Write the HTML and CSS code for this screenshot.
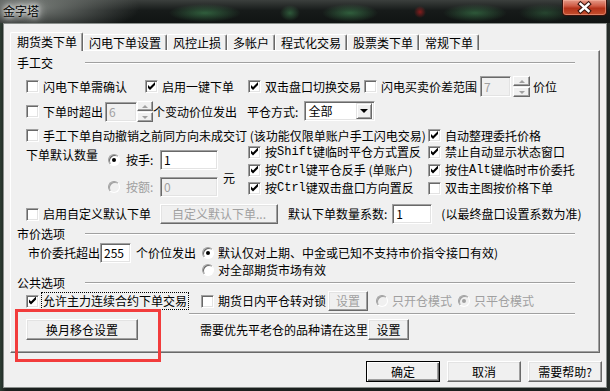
FILE: index.html
```html
<!DOCTYPE html>
<html>
<head>
	<meta charset="utf-8">
	<title>金字塔</title>
	<link rel="stylesheet" href="styles.css">
</head>
<body>

	<div class="window">
		<div class="titlebar">
			<span class="title">金字塔</span>
			<div class="close">
				<svg width="45" height="16" viewBox="0 0 45 16">
					<path d="M18.5 4 L26.5 11 M26.5 4 L18.5 11" stroke="#3a1610" stroke-width="4.6" stroke-linecap="square" fill="none"/>
					<path d="M18.5 4 L26.5 11 M26.5 4 L18.5 11" stroke="#fff" stroke-width="2.4" stroke-linecap="square" fill="none"/>
				</svg>
			</div>
		</div>

		<div class="client">
			<div class="tabs">
				<span class="tab on">期货类下单</span>
				<span class="tab">闪电下单设置</span>
				<span class="tab">风控止损</span>
				<span class="tab">多帐户</span>
				<span class="tab">程式化交易</span>
				<span class="tab">股票类下单</span>
				<span class="tab">常规下单</span>
			</div>

			<div class="panel">
				<div class="group"><span class="group-label">手工交</span><span class="rule"></span></div>

				<div class="row r1">
					<label class="chk w119"><span class="cb"></span>闪电下单需确认</label>
					<label class="chk w103"><span class="cb on"></span>启用一键下单</label>
					<label class="chk w116"><span class="cb on"></span>双击盘口切换交易</label>
					<label class="chk"><span class="cb"></span>闪电买卖价差范围</label>
					<span class="field off f31 ml3">7</span>
					<span class="spin ml2"><span class="up"></span><span class="down"></span></span>
					<span class="ml3">价位</span>
				</div>

				<div class="row r2">
					<label class="chk"><span class="cb"></span>下单时超出</label>
					<span class="field off f32 ml2">6</span>
					<span class="spin narrow"><span class="up"></span><span class="down"></span></span>
					<span>个变动价位发出</span>
					<span class="ml10">平仓方式:</span>
					<span class="select ml6"><span class="select-text">全部</span><span class="drop"></span></span>
				</div>

				<div class="row r3">
					<label class="chk w402"><span class="cb"></span>手工下单自动撤销之前同方向未成交订 (该功能仅限单账户手工闪电交易)</label>
					<label class="chk"><span class="cb on"></span>自动整理委托价格</label>
				</div>

				<div class="qty">
					<div class="qty-left">
						<span class="qty-label">下单默认数量</span>
						<div class="qty-radios">
							<div class="qty-row"><span class="rb on"></span><span class="qty-name">按手:</span><span class="field f58">1</span></div>
							<div class="qty-row off"><span class="rb off"></span><span class="qty-name">按额:</span><span class="field off f58">0</span></div>
						</div>
						<span class="yuan">元</span>
					</div>
					<div class="qty-checks">
						<label class="chk"><span class="cb on"></span>按<span class="mono">Shift</span>键临时平仓方式置反</label>
						<label class="chk"><span class="cb on"></span>禁止自动显示状态窗口</label>
						<label class="chk"><span class="cb on"></span>按<span class="mono">Ctrl</span>键平仓反手 (单账户)</label>
						<label class="chk"><span class="cb on"></span>按住<span class="mono">Alt</span>键临时市价委托</label>
						<label class="chk"><span class="cb on"></span>按<span class="mono">Ctrl</span>键双击盘口方向置反</label>
						<label class="chk"><span class="cb"></span>双击主图按价格下单</label>
					</div>
				</div>

				<div class="row r-custom">
					<label class="chk w134"><span class="cb"></span>启用自定义默认下单</label>
					<span class="btn off w118">自定义默认下单...</span>
					<span class="ml10">默认下单数量系数:</span>
					<span class="field f40 ml5">1</span>
					<span class="ml9">(以最终盘口设置系数为准)</span>
				</div>

				<div class="group g-market"><span class="group-label">市价选项</span><span class="rule"></span></div>

				<div class="row r-market">
					<span class="ml2">市价委托超出</span>
					<span class="field f31">255</span>
					<span class="ml5">个价位发出</span>
					<label class="opt ml6"><span class="rb on"></span>默认仅对上期、中金或已知不支持市价指令接口有效)</label>
				</div>
				<div class="row r-market2">
					<label class="opt ml176"><span class="rb"></span>对全部期货市场有效</label>
				</div>

				<div class="group g-public"><span class="group-label">公共选项</span><span class="rule"></span></div>

				<div class="row r-allow">
					<label class="chk"><span class="cb on"></span><span class="focus">允许主力连续合约下单交易</span></label>
					<label class="chk ml12"><span class="cb"></span>期货日内平仓转对锁</label>
					<span class="btn off w40 ml2">设置</span>
					<label class="opt off ml8"><span class="rb off"></span>只开仓模式</label>
					<label class="opt off ml6"><span class="rb off on"></span>只平仓模式</label>
				</div>
				<div class="rule sub"></div>

				<div class="row r-roll">
					<span class="btn w112">换月移仓设置</span>
					<span class="ml62">需要优先平老仓的品种请在这里</span>
					<span class="btn w41">设置</span>
				</div>
			</div>

			<div class="actions">
				<span class="btn def">确定</span>
				<span class="btn">取消</span>
				<span class="btn">需要帮助?</span>
			</div>
		</div>

		<div class="mark"></div>
	</div>

</body>
</html>
```
FILE: styles.css
```css
body {
	margin: 0;
	font-family: "Noto Sans CJK SC", "Liberation Sans", sans-serif;
	font-size: 12px;
	line-height: 14px;
	color: #000;
	background: #1a1f1d;
}

.window {
	position: relative;
	width: 610px;
	height: 391px;
	display: flex;
	flex-direction: column;
	overflow: hidden;
	background: linear-gradient(90deg, #2d3d33, #1b201e 1%, #1b201e 99%, #2b322e);
}

/* title bar, aero glass over a dark wallpaper */
.titlebar {
	height: 23px;
	flex: none;
	display: flex;
	justify-content: space-between;
	background:
		radial-gradient(ellipse 36px 9px at 205px 13px, rgba(70, 150, 90, .55), transparent),
		radial-gradient(ellipse 10px 8px at 290px 13px, rgba(70, 150, 90, .5), transparent),
		radial-gradient(ellipse 28px 9px at 350px 13px, rgba(70, 150, 90, .55), transparent),
		radial-gradient(ellipse 6px 6px at 420px 12px, rgba(180, 30, 30, .7), transparent),
		radial-gradient(ellipse 32px 9px at 475px 13px, rgba(70, 150, 90, .5), transparent),
		radial-gradient(ellipse 26px 9px at 545px 13px, rgba(70, 150, 90, .35), transparent),
		radial-gradient(ellipse 110px 28px at 30px 8px, rgba(150, 155, 150, .75), transparent),
		linear-gradient(#3b3f3d, #171b1a 45%, #101413);
}

.title {
	padding: 4px 0 0 3px;
	color: #000;
	text-shadow: 0 0 4px #fff, 0 0 8px #fff, 0 0 12px #eee;
}

.close {
	width: 45px;
	height: 16px;
	margin-right: 3px;
	box-sizing: border-box;
	border: 1px solid #3a120c;
	border-top: none;
	border-radius: 0 0 4px 4px;
	background: linear-gradient(#e49a88, #cf5b44 40%, #b4321a 55%, #c4502e);
	box-shadow: inset 0 0 0 1px rgba(255, 190, 170, .45);
}

.close svg {
	display: block;
	margin-left: -1px;
}

.client {
	flex: 1;
	margin: 0 3px 3px;
	border: 1px solid #8a8f8c;
	background: #f0f0f0;
	padding: 8px 0 0 6px;
	display: flex;
	flex-direction: column;
}

/* tabs */
.tabs {
	display: flex;
	align-items: flex-end;
	height: 18px;
}

.tab {
	height: 16px;
	box-sizing: border-box;
	padding: 1px 5px 0;
	border: 1px solid;
	border-bottom: none;
	border-color: #fff #696969 #fff #fff;
	box-shadow: inset -1px 0 #a0a0a0;
	border-radius: 2px 2px 0 0;
	white-space: nowrap;
}

.tab.on {
	height: 19px;
	margin-bottom: -1px;
	padding: 2px 5px 0 6px;
	background: #f0f0f0;
	position: relative;
	z-index: 1;
}

.panel {
	position: relative;
	width: 590px;
	height: 303px;
	box-sizing: border-box;
	border: 1px solid;
	border-color: #fff #696969 #696969 #fff;
	box-shadow: inset -1px -1px #a0a0a0;
	padding: 5px 0 0 15px;
	display: flex;
	flex-direction: column;
}

.group {
	display: flex;
	align-items: center;
	height: 14px;
	margin-left: -9px;
}

.group-label {
	width: 68px;
}

.rule {
	flex: 1;
	height: 0;
	border-top: 1px solid #a0a0a0;
	border-bottom: 1px solid #fff;
	margin-right: 24px;
}

.rule.sub {
	flex: none;
	margin: 2px 24px 0 163px;
}

.row {
	display: flex;
	align-items: center;
	height: 20px;
	white-space: nowrap;
}

.r1 { margin-top: 6px; height: 21px; }
.r2 { margin-top: 4px; height: 21px; }
.r3 { margin-top: 6px; height: 15px; }
.r-custom { margin-top: 7px; }
.g-market { margin-top: 3px; }
.r-market { margin-top: 2px; }
.r-market2 { height: 14px; }
.g-public { margin-top: -1px; }
.r-allow { margin-top: 1px; }
.r-roll { margin-top: 4px; height: 21px; }

/* checkboxes and radios */
.chk, .opt {
	display: flex;
	align-items: center;
	white-space: nowrap;
}

.cb {
	position: relative;
	flex: none;
	width: 13px;
	height: 13px;
	box-sizing: border-box;
	margin-right: 4px;
	border: 1px solid;
	border-color: #a0a0a0 #fff #fff #a0a0a0;
	box-shadow: inset 1px 1px #696969, inset -1px -1px #e3e3e3;
	background: #fff;
}

.cb.on::after {
	content: "";
	position: absolute;
	left: 1px;
	top: 1px;
	width: 9px;
	height: 9px;
	background: #000;
	clip-path: polygon(1px 3px, 3px 5px, 8px 0, 8px 3px, 3px 8px, 1px 6px);
}

.rb {
	position: relative;
	flex: none;
	width: 12px;
	height: 12px;
	box-sizing: border-box;
	border-radius: 50%;
	border: 1px solid;
	border-color: #a0a0a0 #fff #fff #a0a0a0;
	box-shadow: inset 1px 1px #696969;
	background: #fff;
}

.opt .rb {
	margin-right: 4px;
}

.rb.on::after {
	content: "";
	position: absolute;
	left: 3px;
	top: 3px;
	width: 4px;
	height: 4px;
	border-radius: 50%;
	background: #000;
}

.rb.off {
	background: #f0f0f0;
	box-shadow: inset 1px 1px #a0a0a0;
}

.rb.off.on::after {
	background: #a0a0a0;
}

.opt.off, .qty-row.off {
	color: #a0a0a0;
}

.focus {
	margin-left: -2px;
	padding: 1px;
	border: 1px dotted #000;
}

.mono {
	font-family: "Liberation Mono", monospace;
	font-size: 12px;
}

/* edit fields */
.field {
	display: flex;
	align-items: center;
	flex: none;
	height: 20px;
	box-sizing: border-box;
	padding: 0 3px;
	border: 1px solid;
	border-color: #a0a0a0 #fff #fff #a0a0a0;
	box-shadow: inset 1px 1px #696969, inset -1px -1px #e3e3e3;
	background: #fff;
}

.field.off {
	background: #f0f0f0;
	color: #a0a0a0;
}

.r1 .field { height: 21px; }

.f31 { width: 31px; }
.f32 { width: 32px; }
.f40 { width: 40px; }
.f58 { width: 58px; }

.spin {
	display: flex;
	flex-direction: column;
	gap: 1px;
	width: 17px;
	flex: none;
}

.spin.narrow { width: 16px; }

.spin span {
	height: 10px;
	box-sizing: border-box;
	border: 1px solid;
	border-color: #fff #696969 #696969 #fff;
	box-shadow: inset -1px -1px #a0a0a0;
	display: flex;
	align-items: center;
	justify-content: center;
}

.spin .up::after {
	content: "";
	border-style: solid;
	border-width: 0 3px 3px;
	border-color: transparent transparent #a0a0a0;
}

.spin .down::after {
	content: "";
	border-style: solid;
	border-width: 3px 3px 0;
	border-color: #a0a0a0 transparent transparent;
}

.select {
	align-self: flex-start;
	display: flex;
	align-items: center;
	width: 71px;
	height: 20px;
	box-sizing: border-box;
	padding: 2px;
	border: 1px solid;
	border-color: #a0a0a0 #fff #fff #a0a0a0;
	box-shadow: inset 1px 1px #696969, inset -1px -1px #e3e3e3;
	background: #fff;
}

.select-text {
	flex: 1;
	padding-left: 1px;
}

.drop {
	width: 16px;
	height: 16px;
	box-sizing: border-box;
	border: 1px solid;
	border-color: #e3e3e3 #696969 #696969 #e3e3e3;
	box-shadow: inset 1px 1px #fff, inset -1px -1px #a0a0a0;
	background: #f0f0f0;
	display: flex;
	align-items: center;
	justify-content: center;
}

.drop::after {
	content: "";
	border-style: solid;
	border-width: 4px 4px 0;
	border-color: #000 transparent transparent;
}

/* default quantity block */
.qty {
	display: flex;
	height: 54px;
}

.qty-left {
	width: 222px;
	display: flex;
}

.qty-label {
	width: 82px;
	padding-top: 5px;
}

.qty-radios {
	display: flex;
	flex-direction: column;
	gap: 7px;
	padding-top: 7px;
}

.qty-row {
	display: flex;
	align-items: center;
	height: 20px;
}

.qty-row .rb {
	margin-right: 6px;
}

.qty-name {
	width: 34px;
}

.yuan {
	padding-top: 28px;
	margin-left: 5px;
}

.qty-checks {
	display: grid;
	grid-template-columns: 180px auto;
	grid-auto-rows: 18px;
	align-items: center;
}

/* buttons */
.btn {
	display: flex;
	align-items: center;
	justify-content: center;
	flex: none;
	height: 21px;
	box-sizing: border-box;
	border: 1px solid;
	border-color: #fff #696969 #696969 #fff;
	box-shadow: inset -1px -1px #a0a0a0, inset 1px 1px #e3e3e3;
	background: #f0f0f0;
	white-space: nowrap;
}

.btn.off {
	color: #a0a0a0;
}

.btn.def {
	border-color: #000;
	box-shadow: inset 1px 1px #fff, inset -1px -1px #696969, inset -2px -2px #a0a0a0;
}

.r-custom .btn, .r-allow .btn { height: 20px; }

.w40 { width: 40px; }
.w41 { width: 41px; }
.w103 { width: 103px; }
.w112 { width: 112px; }
.w116 { width: 116px; }
.w118 { width: 118px; }
.w119 { width: 119px; }
.w134 { width: 134px; }
.w402 { width: 402px; }

.ml2 { margin-left: 2px; }
.ml3 { margin-left: 3px; }
.ml5 { margin-left: 5px; }
.ml6 { margin-left: 6px; }
.ml8 { margin-left: 8px; }
.ml9 { margin-left: 9px; }
.ml10 { margin-left: 10px; }
.ml12 { margin-left: 12px; }
.ml62 { margin-left: 62px; }
.ml176 { margin-left: 176px; }

.actions {
	display: flex;
	justify-content: flex-end;
	gap: 7px;
	margin-top: 8px;
	padding-right: 4px;
}

.actions .btn {
	width: 74px;
}

/* red annotation box drawn over the dialog */
.mark {
	position: absolute;
	left: 15px;
	top: 309px;
	width: 146px;
	height: 53px;
	box-sizing: border-box;
	border: 3px solid #f23c3c;
	pointer-events: none;
}
```
